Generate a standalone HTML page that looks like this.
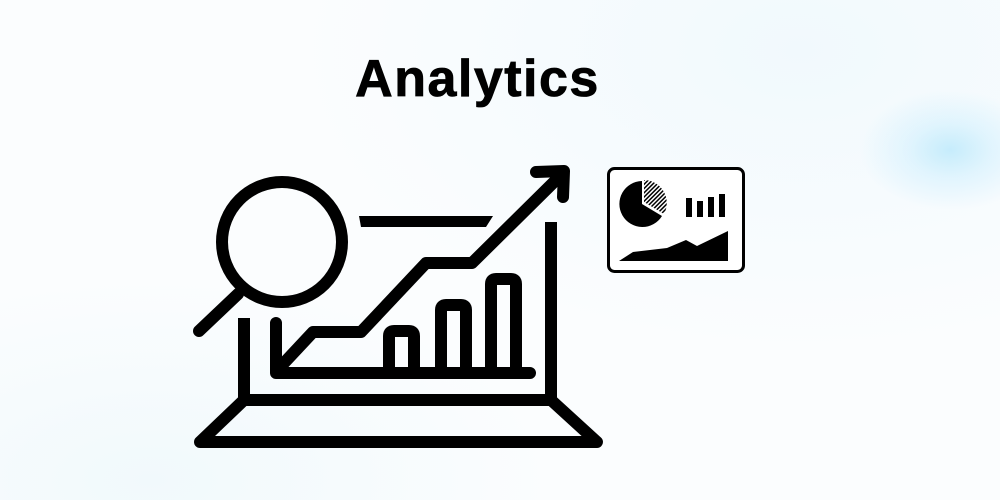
<!DOCTYPE html>
<html><head><style>
html,body{margin:0;padding:0;}
body{width:1000px;height:500px;overflow:hidden;position:relative;
background:radial-gradient(ellipse 90px 60px at 950px 150px,#c6ecfc 0%,rgba(210,240,253,0.6) 45%,rgba(255,255,255,0) 100%),
radial-gradient(ellipse 400px 200px at 150px 480px,#f1f9fc,rgba(255,255,255,0)),
radial-gradient(ellipse 500px 300px at 800px 50px,#f1f9fd,rgba(255,255,255,0)),#fbfdfe;}
h1{position:absolute;left:0;width:955px;text-align:center;top:49px;margin:0;font:900 52px "Liberation Sans",sans-serif;color:#000;letter-spacing:1.5px;-webkit-text-stroke:0.8px #000;}
svg{position:absolute;left:0;top:0;}
</style></head><body>
<h1>Analytics</h1>
<svg width="1000" height="500" viewBox="0 0 1000 500">
<g fill="none" stroke="#000" stroke-width="12" stroke-linecap="round" stroke-linejoin="round">
<circle cx="282" cy="242" r="60"/>
<line x1="238" y1="294" x2="199" y2="331"/>
<line x1="244" y1="318" x2="244" y2="400" stroke-linecap="butt"/>
<line x1="551" y1="222" x2="551" y2="400" stroke-linecap="butt"/>
<path d="M244 400 L551 400 L597 442 L200 442 Z"/>
<path d="M276 323 L276 373 L530 373"/>
<path d="M284 363 L313 332 L361 332 L426 263 L472 263 L556 180"/>
<path d="M536 172 L564 171 L563 197"/>
<path d="M389 373 L389 336 Q389 331 394 331 L409 331 Q414 331 414 336 L414 373"/>
<path d="M441 373 L441 310 Q441 305 446 305 L461 305 Q466 305 466 310 L466 373"/>
<path d="M491 373 L491 284 Q491 279 496 279 L511 279 Q516 279 516 284 L516 373"/>
</g>
<polygon points="359,216 493,216 486,227 361,227" fill="#000"/>
<rect x="608.5" y="168.5" width="135" height="103" rx="6" fill="#fff" stroke="#000" stroke-width="3"/>
<defs><pattern id="h" width="3" height="3" patternUnits="userSpaceOnUse" patternTransform="rotate(45)"><rect width="1.5" height="3" fill="#000"/></pattern></defs>
<path d="M642 204 L642 181 A23 23 0 1 0 662 216 Z" fill="#000"/>
<path d="M644 202 L644 180 A23 23 0 0 1 664 214 Z" fill="url(#h)"/>
<rect x="686" y="198" width="6" height="19" fill="#000"/>
<rect x="697" y="201" width="6" height="16" fill="#000"/>
<rect x="708" y="197" width="6" height="20" fill="#000"/>
<rect x="719" y="194" width="6" height="23" fill="#000"/>
<polygon points="619,261 633,252 667,248 686,240 697,246 728,231 728,261" fill="#000"/>
</svg>
</body></html>
